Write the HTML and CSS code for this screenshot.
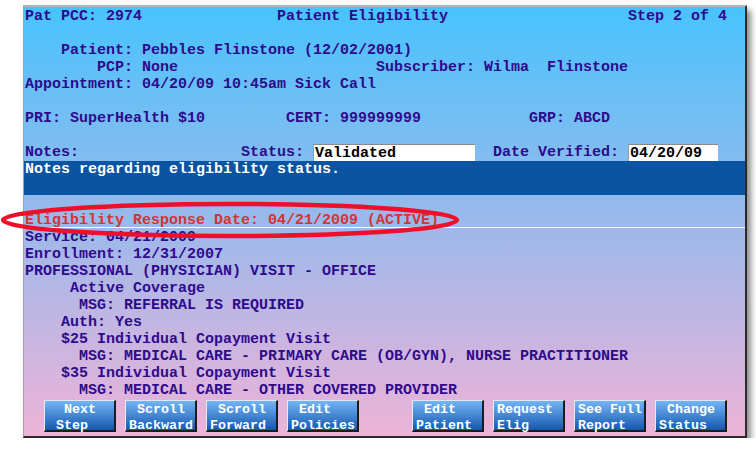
FILE: index.html
```html
<!DOCTYPE html>
<html lang="en">
<head>
    <meta charset="UTF-8">
    <meta name="viewport" content="width=device-width, initial-scale=1.0">
    <title>Patient Eligibility</title>
    <link rel="stylesheet" href="styles.css">
</head>
<body>
    <div class="window">
        <div class="screen">
            <div class="row">Pat PCC: 2974               Patient Eligibility                    Step 2 of 4</div>
            <div class="row"></div>
            <div class="row">    Patient: Pebbles Flinstone (12/02/2001)</div>
            <div class="row">        PCP: None                      Subscriber: Wilma  Flinstone</div>
            <div class="row">Appointment: 04/20/09 10:45am Sick Call</div>
            <div class="row"></div>
            <div class="row">PRI: SuperHealth $10         CERT: 999999999            GRP: ABCD</div>
            <div class="row"></div>
            <div class="row">Notes:                  Status: <span class="field field-status">Validated</span>  Date Verified: <span class="field field-date">04/20/09</span></div>
            <div class="notes">
                <div class="row">Notes regarding eligibility status.</div>
                <div class="row"></div>
            </div>
            <div class="row"></div>
            <div class="row response">Eligibility Response Date: 04/21/2009 (ACTIVE)</div>
            <div class="row">Service: 04/21/2009</div>
            <div class="row">Enrollment: 12/31/2007</div>
            <div class="row">PROFESSIONAL (PHYSICIAN) VISIT - OFFICE</div>
            <div class="row">     Active Coverage</div>
            <div class="row">      MSG: REFERRAL IS REQUIRED</div>
            <div class="row">    Auth: Yes</div>
            <div class="row">    $25 Individual Copayment Visit</div>
            <div class="row">      MSG: MEDICAL CARE - PRIMARY CARE (OB/GYN), NURSE PRACTITIONER</div>
            <div class="row">    $35 Individual Copayment Visit</div>
            <div class="row">      MSG: MEDICAL CARE - OTHER COVERED PROVIDER</div>
        </div>
        <div class="buttons">
            <div class="group">
                <button class="key">  Next
 Step</button>
                <button class="key"> Scroll
Backward</button>
                <button class="key"> Scroll
Forward</button>
                <button class="key"> Edit
Policies</button>
            </div>
            <div class="group group-right">
                <button class="key"> Edit
Patient</button>
                <button class="key">Request
Elig</button>
                <button class="key">See Full
Report</button>
                <button class="key"> Change
Status</button>
            </div>
        </div>
    </div>

    <svg class="circle" width="462" height="42" viewBox="0 0 462 42">
        <ellipse cx="230" cy="20" rx="227" ry="16" fill="none" stroke="#ee1028" stroke-width="4.5"/>
    </svg>
</body>
</html>
```

FILE: styles.css
```css
/* terminal style eligibility screen */
body {
    margin: 0;
    background: #fff;
    font-family: "Liberation Mono", "DejaVu Sans Mono", monospace;
    font-weight: bold;
}

.window {
    box-sizing: border-box;
    width: 724px;
    height: 433px;
    margin: 5px 0 0 23px;
    border-style: solid;
    border-width: 2px 2px 2px 1px;
    border-color: #b4b4b4 #2a2a2a #2a2a2a #a4a4a4;
    background: linear-gradient(#48c3fd, #a3b8e9 55%, #eeb3d8);
    box-shadow: 4px 5px 6px rgba(0, 0, 0, 0.45);
    display: flex;
    flex-direction: column;
}

.screen {
    padding-top: 1px;
    font-size: 15px;
    line-height: 17px;
    color: #2e0b8c;
}

.row {
    height: 17px;
    padding-left: 1px;
    white-space: pre;
}

.field {
    display: inline-block;
    box-sizing: border-box;
    height: 17px;
    vertical-align: top;
    padding-left: 1px;
    background: #fff;
    color: #000;
    border-top: 1px solid #8a8a8a;
    border-left: 1px solid #9a9a9a;
}

.field-status {
    width: 162px;
}

.field-date {
    width: 90px;
}

.notes {
    background: #0a54a2;
    color: #fff;
}

.response {
    height: 15px;
    color: #d43434;
    border-bottom: 1px solid #fff;
    margin-bottom: 1px;
}

.buttons {
    display: flex;
    padding: 1px 0 0 20px;
}

.group {
    display: flex;
    gap: 9px;
}

.group-right {
    margin-left: 53px;
}

.key {
    box-sizing: border-box;
    width: 72px;
    height: 32px;
    margin: 0;
    padding: 1px 0 0 3px;
    border-style: solid;
    border-width: 1px 2px 2px 1px;
    border-color: #dfe8f4 #1c1c1c #1c1c1c #e4ecf6;
    background: linear-gradient(#74b5f6, #1558ad);
    color: #fff;
    font-family: "Liberation Mono", "DejaVu Sans Mono", monospace;
    font-weight: bold;
    font-size: 13.33px;
    line-height: 16px;
    text-align: left;
    white-space: pre;
    display: block;
}

.circle {
    position: absolute;
    left: 0;
    top: 200px;
}
```
